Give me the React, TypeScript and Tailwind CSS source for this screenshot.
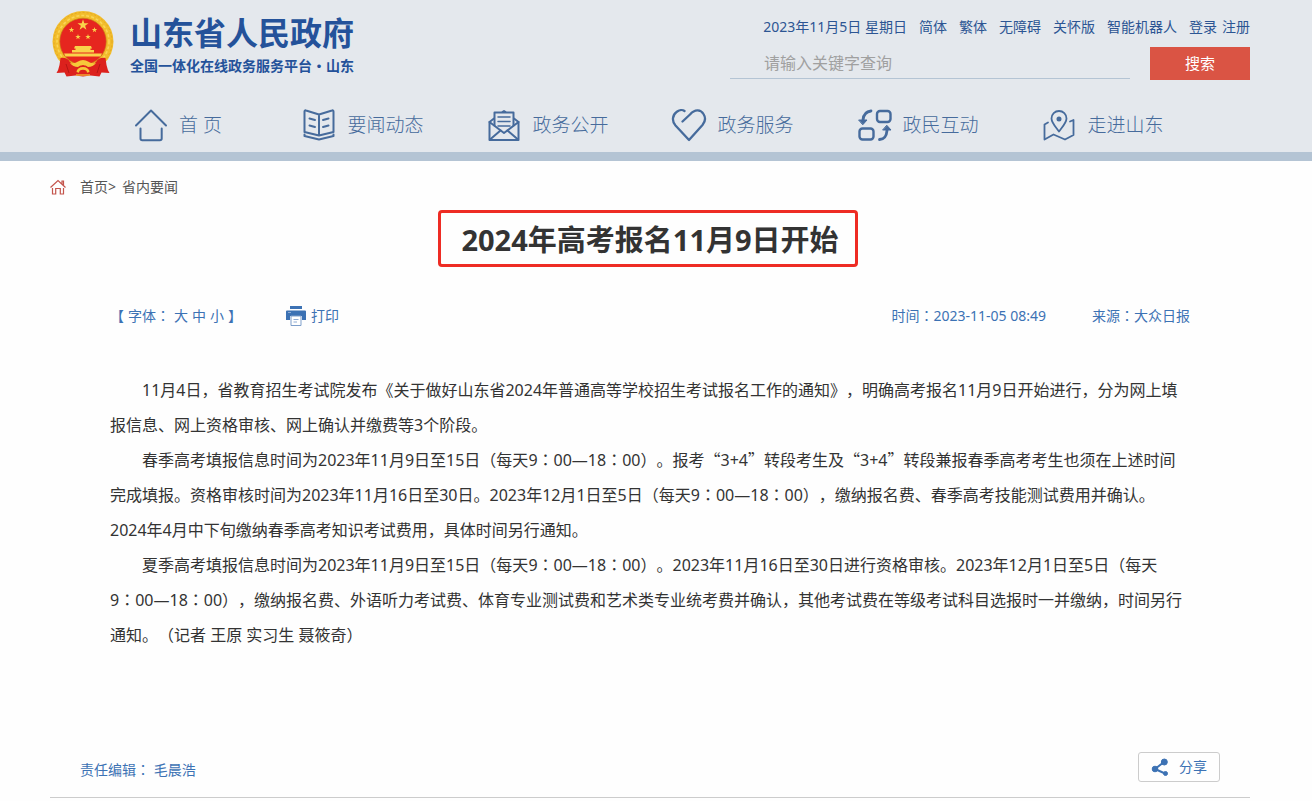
import React, { type ReactNode } from 'react';

const iconClass = 'h-9 w-9 shrink-0';

function NavSvg({ children }: { children: ReactNode }) {
  return (
    <svg viewBox="0 0 36 36" className={iconClass} fill="none" stroke="#466b9c" strokeWidth="2" strokeLinecap="round" strokeLinejoin="round" aria-hidden="true">
      {children}
    </svg>
  );
}

const HomeIcon = () => (
  <NavSvg>
    <path d="M3 18.5 18 3.5l15 15" />
    <path d="M7.5 21.5v10a1.8 1.8 0 0 0 1.8 1.8h17.6a1.8 1.8 0 0 0 1.8-1.8v-10" />
  </NavSvg>
);

const BookIcon = () => (
  <NavSvg>
    <path d="M18 7.500 5 3.500Q3.500 3 3.500 4.500V25l14.500 3.500L32.500 25V4.500Q32.500 3 31 3.500ZM18 7.500V28.500" />
    <path d="M3.500 27.500v1.500L18 32.500l14.500-3.500v-1.500" />
    <path d="M8.500 11.500l5.500 1.500M8.500 18.500l5.500 1.500M27.500 11.500l-5.500 1.500M27.500 18.500l-5.500 1.500" />
  </NavSvg>
);

const MailIcon = () => (
  <NavSvg>
    <path d="M3.500 15v18h29V15L18 26Z" />
    <path d="M3.500 15 8 11.500M32.500 15 28 11.500M4 32.500l10.500-9M32 32.500l-10.500-9" />
    <path d="M8.500 18.500v-13h19v13M15.500 5.500 18 4l2.500 1.500" />
    <path d="M12 10h12M12 14.500h12M12 19h12" strokeWidth="1.500" />
  </NavSvg>
);

const HeartIcon = () => (
  <NavSvg>
    <path d="M11.500 14.500 19 7.500C24 1.500 30 2.500 32.500 7c2.500 4 1.500 8-1 11L18 33 4.500 18.500C.5 14 1.500 8 5.500 5c2.500-2 6-2.500 8-1" strokeWidth="2.300" />
  </NavSvg>
);

const ExchangeIcon = () => (
  <NavSvg>
    <rect x="21" y="4" width="13.500" height="11" rx="3" strokeWidth="2.400" />
    <rect x="3.500" y="21.500" width="14" height="11" rx="3" strokeWidth="2.400" />
    <path d="M15 4C9.500 4.500 7.500 7.500 7 13M23.500 32.500c5.500-.500 7-3.500 7.500-9" strokeWidth="2.800" />
    <path d="M3 13h8L7 17.500ZM27 23h8L31 18.500Z" fill="#466b9c" strokeWidth="1" />
  </NavSvg>
);

const MapIcon = () => (
  <NavSvg>
    <path d="M18 24.500C13.500 18.500 10.500 15.500 10.500 11.500a7.500 7.500 0 0 1 15 0c0 4-3 7-7.500 13Z" strokeWidth="1.800" />
    <circle cx="18" cy="12" r="1.500" fill="#466b9c" />
    <path d="M7 15.500 3.500 17.500V32.500l9-5 11.500 5 8.500-4.500V13l-3.500 1.500" strokeWidth="1.800" />
  </NavSvg>
);

const navItems = [
  { label: '首 页', Icon: HomeIcon },
  { label: '要闻动态', Icon: BookIcon },
  { label: '政务公开', Icon: MailIcon },
  { label: '政务服务', Icon: HeartIcon },
  { label: '政民互动', Icon: ExchangeIcon },
  { label: '走进山东', Icon: MapIcon },
];

const topLinks = ['简体', '繁体', '无障碍', '关怀版', '智能机器人'];

const STAR = 'M0-1 .225-.309.951-.309.363.118.588.809 0 .382-.588.809-.363.118-.951-.309-.225-.309Z';

function Emblem() {
  return (
    <svg viewBox="0 0 62 67" className="h-[67px] w-[62px] shrink-0" aria-hidden="true">
      <circle cx="31" cy="30.500" r="30.500" fill="#f2bd2c" />
      <circle cx="31" cy="30.500" r="29" fill="none" stroke="#e3a625" strokeWidth="1" strokeDasharray="2 2" />
      <circle cx="31" cy="30.500" r="26" fill="none" stroke="#fad556" strokeWidth="1.600" strokeDasharray="3 2" />
      <circle cx="31" cy="30.500" r="23.300" fill="#e6261f" stroke="#c98318" strokeWidth=".7" />
      <g fill="#f9d34a">
        <path d={STAR} transform="translate(31 14) scale(5.800)" />
        <path d={STAR} transform="translate(19.500 19) scale(2.900)" />
        <path d={STAR} transform="translate(42.500 19) scale(2.900)" />
        <path d={STAR} transform="translate(26 26) scale(2.900)" />
        <path d={STAR} transform="translate(36 26) scale(2.900)" />
        <path d="M23 35h16l1 2.500h-1.500V39H42v2.500H20V39h3.500v-1.500H22ZM12 42.500h38l-1.500 3h-35Z" />
      </g>
      <path d="M8.500 47Q15 46 18 51q5 4 13 3 8 1 13-3 3-5 9.500-4l1 7q1 5 3 8l-8-.5-2 4-9-1-7.500 1-7.500-1-9 1-2-4-8 .5q2-3 3-8Z" fill="#dc211d" />
      <path d="M18 52q5 1 8-1.500 2-1.500 5-1.500t5 1.500q3 2.500 8 1.500-3 4-8 4-2-2-5-2t-5 2q-5 0-8-4Z" fill="#f6c83a" />
      <path d="M24.500 61a6.500 5 0 0 1 13 0l-2.500.8a4 3 0 0 0-8 0Z" fill="#f6c83a" />
      <path d="m14 53 3 9M48 53l-3 9" stroke="#b41614" strokeWidth="1" />
      <path d="M24 64h14" stroke="#f6c83a" strokeWidth="1.200" />
    </svg>
  );
}

const Colon = () => <span lang="zh-TW" className="font-['Noto_Sans_CJK_TC',sans-serif] leading-none">：</span>;

/* Sets colons centred and curly quotes in full-width forms; clock ranges stay on one line. */
function Cjk({ children }: { children: string }) {
  return (
    <>
      {children.split(/(9：00—18：00|[：“”])/).map((part, i) => {
        if (part.startsWith('9：')) {
          return (
            <span key={i} className="whitespace-nowrap">
              9<Colon />00—18<Colon />00
            </span>
          );
        }
        if (part === '：') return <Colon key={i} />;
        if (part === '“' || part === '”') return <span key={i} className="font-['Noto_Sans_CJK_SC',sans-serif] leading-none">{part}</span>;
        return part;
      })}
    </>
  );
}

const paragraphs = [
  '11月4日，省教育招生考试院发布《关于做好山东省2024年普通高等学校招生考试报名工作的通知》，明确高考报名11月9日开始进行，分为网上填报信息、网上资格审核、网上确认并缴费等3个阶段。',
  '春季高考填报信息时间为2023年11月9日至15日（每天9：00—18：00）。报考“3+4”转段考生及“3+4”转段兼报春季高考考生也须在上述时间完成填报。资格审核时间为2023年11月16日至30日。2023年12月1日至5日（每天9：00—18：00），缴纳报名费、春季高考技能测试费用并确认。2024年4月中下旬缴纳春季高考知识考试费用，具体时间另行通知。',
  '夏季高考填报信息时间为2023年11月9日至15日（每天9：00—18：00）。2023年11月16日至30日进行资格审核。2023年12月1日至5日（每天9：00—18：00），缴纳报名费、外语听力考试费、体育专业测试费和艺术类专业统考费并确认，其他考试费在等级考试科目选报时一并缴纳，时间另行通知。（记者 王原 实习生 聂筱奇）',
];

function Header() {
  return (
    <header className="border-b-[9px] border-[#b4c4d4] bg-[#e4e8ed]">
      <div className="flex justify-between pr-[62px] pl-[52px]">
        <a href="#home" className="flex gap-4 pt-[11px] text-[#24529a]">
          <Emblem />
          <span className="flex flex-col font-['Noto_Sans_CJK_SC',sans-serif] font-bold">
            <span className="text-[32px] leading-10">山东省人民政府</span>
            <span className="pt-1 text-sm leading-5">全国一体化在线政务服务平台·山东</span>
          </span>
        </a>
        <div className="w-[520px] pt-[17px]">
          <div className="flex justify-end gap-3 text-sm leading-5 text-[#2c5593]">
            <span>2023年11月5日 星期日</span>
            {topLinks.map((label) => (
              <a key={label} href="#top">{label}</a>
            ))}
            <span className="flex gap-[5px]">
              <a href="#login">登录</a>
              <a href="#register">注册</a>
            </span>
          </div>
          <form className="flex gap-5 pt-[10px]" onSubmit={(e) => e.preventDefault()}>
            <input
              type="text"
              aria-label="请输入关键字查询"
              placeholder="请输入关键字查询"
              className="h-8 min-w-0 flex-1 border-b border-[#b4c4d4] bg-transparent pl-[34px] text-base outline-none placeholder:text-[#a0a0a0]"
            />
            <button type="submit" className="h-[33px] w-[100px] bg-[#da5444] text-[15px] text-white">搜索</button>
          </form>
        </div>
      </div>
      <nav className="grid grid-cols-6 pt-[26px] pr-[117px] pb-[9px] pl-[85px]">
        {navItems.map(({ label, Icon }) => (
          <a key={label} href="#nav" className="flex items-center justify-center gap-[10px] text-[19px] leading-9 font-light text-[#466b9c]">
            <Icon />
            <span className="pt-px">{label}</span>
          </a>
        ))}
      </nav>
    </header>
  );
}

export default function App() {
  return (
    <div className="min-h-screen bg-[#fefefe] font-['Noto_Sans','Noto_Sans_CJK_SC',sans-serif] text-[#333] [text-spacing-trim:space-all]" lang="zh-CN">
      <Header />
      <main className="pr-[62px] pl-[50px]">
        <div className="flex items-center gap-[14px] pt-4 text-sm leading-5 text-[#555]">
          <svg viewBox="0 0 16 16" className="h-4 w-4" fill="none" stroke="#c4544c" strokeWidth="1.200" aria-hidden="true">
            <path d="M.5 8.500 8 1.500l7.500 7M12 5V2h1.500v4.500M2.500 9v6h3.200V9.500h4.600V15h3.200V9" />
          </svg>
          <div className="flex gap-[6px]">
            <span><a href="#home">首页</a>&gt;</span>
            <a href="#news">省内要闻</a>
          </div>
        </div>
        <div className="flex justify-center pt-[13px] pr-1">
          <h1 className="rounded-[4px] border-[3px] border-[#ee2c24] pt-[6px] pr-4 pb-1 pl-5 text-[29px] leading-[41px] font-bold">2024年高考报名11月9日开始</h1>
        </div>
        <div className="flex items-center justify-between px-[60px] pt-[39px] text-sm leading-5 text-[#3c72b4]">
          <div className="flex items-center gap-[44px]">
            <div className="flex gap-1">
              <span>【</span>
              <span><Cjk>字体：</Cjk></span>
              <button type="button">大</button>
              <button type="button">中</button>
              <button type="button">小</button>
              <span>】</span>
            </div>
            <button type="button" className="flex items-center gap-[5px]">
              <svg viewBox="0 0 20 20" className="h-5 w-5" aria-hidden="true">
                <path d="M4 0h12v3H4ZM1 4.500h18a1 1 0 0 1 1 1V14h-4v-4H4v4H0V5.500a1 1 0 0 1 1-1Z" fill="#3c72b4" />
                <path d="M5 10h10v9.500H5Z" fill="#fff" stroke="#7e9fcb" />
                <path d="M7.500 13.500h5M7.500 16h3.500M2 6.500h3" stroke="#8eabd3" />
              </svg>
              打印
            </button>
          </div>
          <div className="flex gap-[46px]">
            <span><Cjk>时间：2023-11-05 08:49</Cjk></span>
            <span><Cjk>来源：大众日报</Cjk></span>
          </div>
        </div>
        <article className="px-[60px] pt-[47px] text-base leading-[35px]">
          {paragraphs.map((text) => (
            <p key={text} className="indent-8"><Cjk>{text}</Cjk></p>
          ))}
        </article>
        <footer className="flex items-center justify-between border-b border-[#ccc] pt-[99px] pr-[30px] pb-[15px] pl-[30px] text-sm leading-5 text-[#3c72b4]">
          <span className="pt-[6px]"><Cjk>责任编辑： 毛晨浩</Cjk></span>
          <button type="button" className="flex h-[30px] w-[82px] items-center justify-center gap-[10px] rounded-[3px] border border-[#ccc]">
            <svg viewBox="0 0 18 18" className="h-[18px] w-[18px]" fill="#3c72b4" stroke="#3c72b4" aria-hidden="true">
              <path d="m4 11 9-7M4 11l10 4.500" strokeWidth="2" />
              <circle cx="13.300" cy="4" r="3" />
              <circle cx="4" cy="11" r="2.800" />
              <circle cx="14.500" cy="15.500" r="2" />
            </svg>
            分享
          </button>
        </footer>
      </main>
    </div>
  );
}
